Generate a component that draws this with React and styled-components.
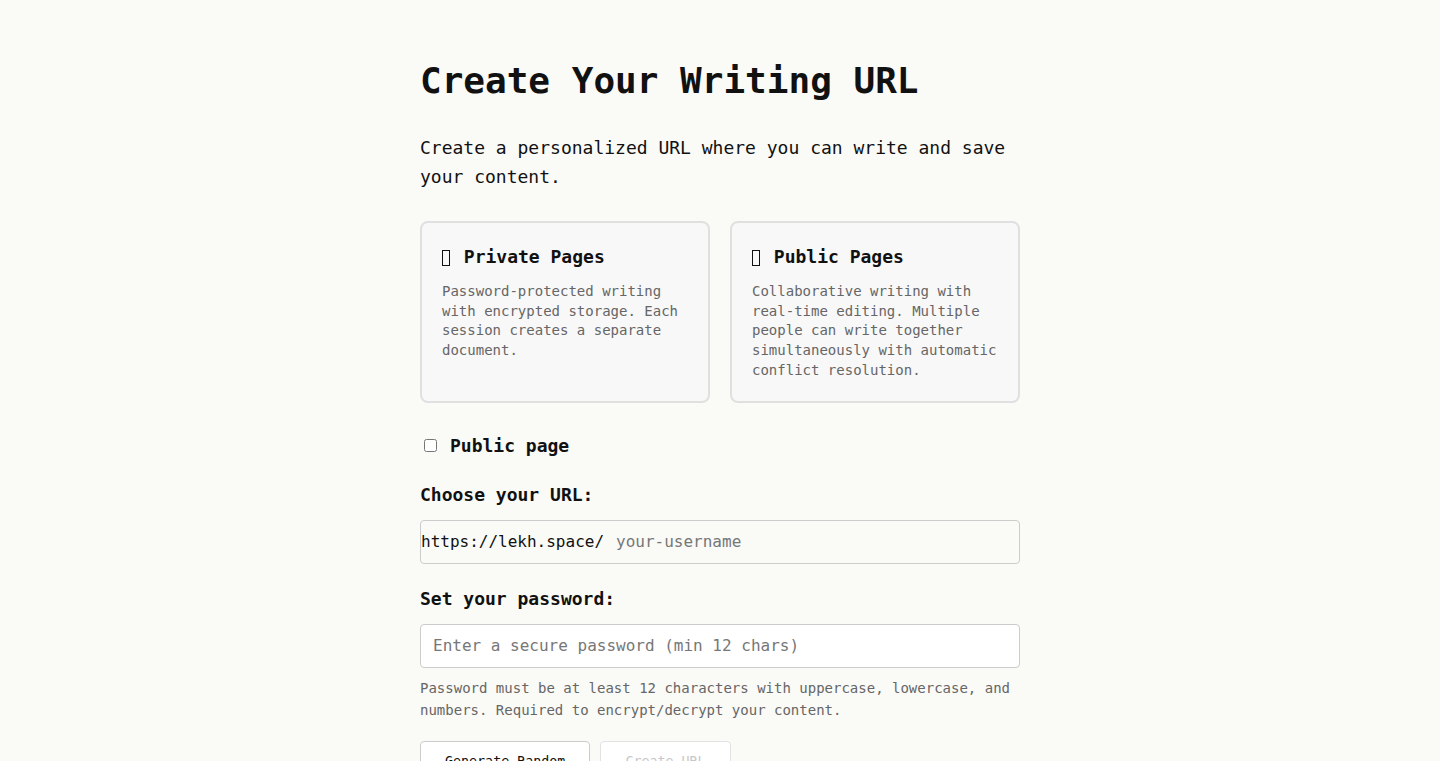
import React, {useState} from "react";
import styled, {createGlobalStyle} from "styled-components";

const GlobalStyle = createGlobalStyle`
  body {
    margin: 0;
    background: #fafaf7;
    color: #111;
    font-family: "DejaVu Sans Mono", "Liberation Mono", monospace;
  }
`

const Page = styled.main`
  width: 600px;
  margin: 0 auto;
  padding-top: 60px;
`

const Title = styled.h1`
  font-size: 36px;
  font-weight: bold;
  line-height: 42px;
  margin: 0 0 31px;
`

const Intro = styled.p`
  font-size: 18px;
  line-height: 29px;
  margin: 0 0 30px;
`

const Cards = styled.div`
  display: grid;
  grid-template-columns: 1fr 1fr;
  gap: 20px;
  margin-bottom: 28px;
`

const Card = styled.div`
  background: #f8f8f8;
  border: 2px solid #e0e0e0;
  border-radius: 8px;
  padding: 19px 20px 20px;
`

const CardTitle = styled.h3`
  font-size: 18px;
  line-height: 29px;
  margin: 0 0 11px;
`

const Glyph = styled.span`
  display: inline-block;
  box-sizing: border-box;
  width: 8px;
  height: 16px;
  margin: 0 3px 0 0;
  border: 1px solid #111;
  vertical-align: -3px;
`

const CardText = styled.p`
  font-size: 14px;
  line-height: 19.7px;
  color: #666;
  margin: 0;
`

const CheckRow = styled.label`
  display: flex;
  align-items: center;
  gap: 10px;
  font-size: 18px;
  font-weight: bold;
  line-height: 29px;
  margin-bottom: 20px;
  cursor: pointer;
`

const Field = styled.div`
  margin-bottom: ${props => props.$last ? "20px" : "20px"};
`

const Label = styled.label`
  display: block;
  font-size: 18px;
  font-weight: bold;
  line-height: 29px;
  margin-bottom: 11px;
`

const UrlBox = styled.div`
  display: flex;
  align-items: center;
  height: 44px;
  box-sizing: border-box;
  border: 1px solid #ccc;
  border-radius: 4px;
`

const Prefix = styled.span`
  font-size: 16px;
  color: #111;
  white-space: nowrap;
`

const Input = styled.input`
  flex: 1;
  width: 100%;
  box-sizing: border-box;
  height: ${props => props.$bare ? "100%" : "44px"};
  padding: 0 12px;
  font-family: inherit;
  font-size: 16px;
  color: #111;
  background: ${props => props.$bare ? "transparent" : "#fff"};
  border: ${props => props.$bare ? "none" : "1px solid #ccc"};
  border-radius: 4px;
  outline: none;

  &::placeholder {
    color: #777;
  }
`

const Hint = styled.p`
  font-size: 14px;
  line-height: 22.4px;
  color: #666;
  margin: 9px 0 0;
`

const Buttons = styled.div`
  display: flex;
  gap: 10px;
`

const Button = styled.button`
  font-family: inherit;
  font-size: 13.33px;
  padding: 12px 24px;
  background: #fff;
  color: ${props => props.disabled ? "#c8c8c8" : "#111"};
  border: 1px solid ${props => props.disabled ? "#e2e2e2" : "#ccc"};
  border-radius: 4px;
  cursor: ${props => props.disabled ? "default" : "pointer"};
`

export default function App() {
  const [isPublic, setIsPublic] = useState(false);
  const [username, setUsername] = useState("");
  const [password, setPassword] = useState("");

  return (
    <Page>
      <GlobalStyle />
      <Title>Create Your Writing URL</Title>
      <Intro>Create a personalized URL where you can write and save your content.</Intro>

      <Cards>
        <Card>
          <CardTitle><Glyph aria-label="lock" /> Private Pages</CardTitle>
          <CardText>Password-protected writing with encrypted storage. Each session creates a separate document.</CardText>
        </Card>
        <Card>
          <CardTitle><Glyph aria-label="globe" /> Public Pages</CardTitle>
          <CardText>Collaborative writing with real-time editing. Multiple people can write together simultaneously with automatic conflict resolution.</CardText>
        </Card>
      </Cards>

      <CheckRow>
        <input type="checkbox" checked={isPublic} onChange={e => setIsPublic(e.target.checked)} />
        Public page
      </CheckRow>

      <Field>
        <Label htmlFor="username">Choose your URL:</Label>
        <UrlBox>
          <Prefix>https://lekh.space/</Prefix>
          <Input
            $bare
            id="username"
            placeholder="your-username"
            value={username}
            onChange={e => setUsername(e.target.value)}
          />
        </UrlBox>
      </Field>

      <Field>
        <Label htmlFor="password">Set your password:</Label>
        <Input
          id="password"
          type="password"
          placeholder="Enter a secure password (min 12 chars)"
          value={password}
          onChange={e => setPassword(e.target.value)}
        />
        <Hint>Password must be at least 12 characters with uppercase, lowercase, and numbers. Required to encrypt/decrypt your content.</Hint>
      </Field>

      <Buttons>
        <Button type="button">Generate Random</Button>
        <Button type="button" disabled={password.length < 12 || !username}>Create URL</Button>
      </Buttons>
    </Page>
  );
}
